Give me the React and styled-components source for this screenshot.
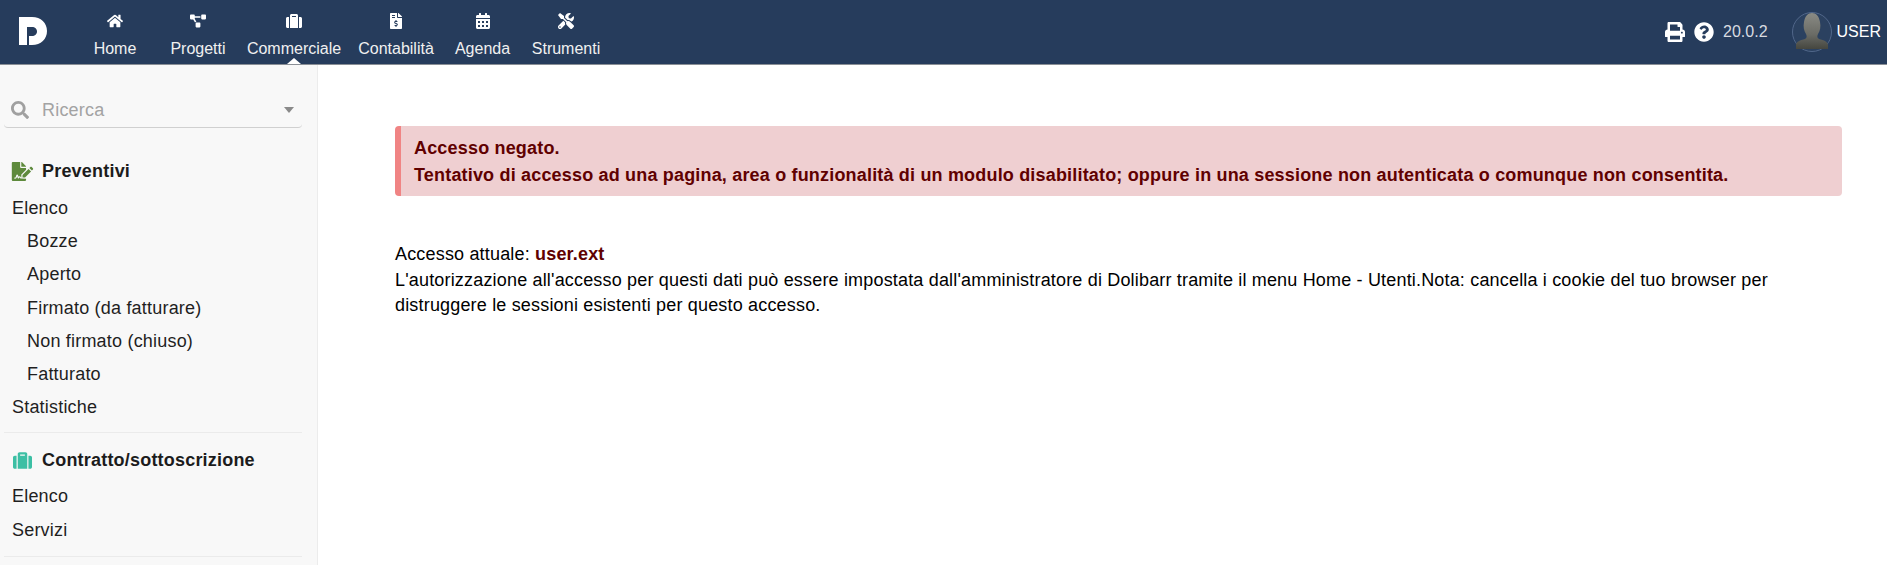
import React from 'react';
import styled, { createGlobalStyle } from 'styled-components';
import {
  FaHome,
  FaProjectDiagram,
  FaSuitcase,
  FaFileInvoiceDollar,
  FaCalendarAlt,
  FaTools,
  FaPrint,
  FaQuestionCircle,
  FaSearch,
  FaFileSignature,
} from 'react-icons/fa';

const GlobalStyle = createGlobalStyle`
  html, body {
    margin: 0;
    padding: 0;
    height: 100%;
    overflow: hidden;
    background: #fff;
    font-family: "Liberation Sans", Arial, sans-serif;
    font-size: 18px;
    color: #000;
  }
`;

const Page = styled.div`
  height: 565px;
  display: flex;
  flex-direction: column;
  overflow: hidden;
`;

// Top bar
const TopBar = styled.header`
  height: 65px;
  flex: none;
  display: flex;
  align-items: stretch;
  background: #263c5c;
  border-bottom: 1px solid #8a8f96;
  box-sizing: border-box;
  color: #f0f0f0;
`;

const Logo = styled.div`
  width: 78px;
  flex: none;
  display: flex;
  align-items: center;
  padding: 0 0 2px 19px;
  box-sizing: border-box;
`;

const Nav = styled.nav`
  display: flex;
  align-items: stretch;
`;

const NavItem = styled.a`
  position: relative;
  width: ${({ $width }) => $width}px;
  display: flex;
  flex-direction: column;
  align-items: center;
  padding-top: 13px;
  box-sizing: border-box;
  font-size: 16px;
  line-height: 18px;
  white-space: nowrap;

  svg {
    width: auto;
    height: 16px;
    margin-bottom: 11px;
    color: #fff;
  }

  ${({ $active }) => $active && `
    &::after {
      content: "";
      position: absolute;
      left: 50%;
      bottom: 0;
      margin-left: -7px;
      border-left: 7px solid transparent;
      border-right: 7px solid transparent;
      border-bottom: 6px solid #fff;
    }
  `}
`;

const TopRight = styled.div`
  margin-left: auto;
  display: flex;
  align-items: center;
  padding-right: 6px;
`;

const ToolIcon = styled.span`
  display: flex;
  margin-right: ${({ $gap }) => $gap}px;
  color: #fff;
  font-size: 20px;
`;

const Version = styled.span`
  font-size: 16px;
  color: #d8dbe0;
  margin-right: 24px;
`;

const Avatar = styled.svg`
  width: 40px;
  height: 40px;
  margin-right: 5px;
`;

const UserName = styled.span`
  font-size: 16px;
  color: #fff;
`;

// Body
const Body = styled.div`
  flex: 1;
  display: flex;
  min-height: 0;
`;

const Sidebar = styled.aside`
  width: 318px;
  flex: none;
  box-sizing: border-box;
  background: #f8f8f8;
  border-right: 1px solid #ececec;
  padding: 28px 15px 0 4px;
  overflow: hidden;
`;

const SearchBox = styled.div`
  height: 34px;
  display: flex;
  align-items: center;
  padding: 0 8px 0 7px;
  border-bottom: 1px solid #d0d0d0;
  border-radius: 0 0 4px 4px;
  color: #a3a3a3;
  font-size: 18px;
  letter-spacing: 0.2px;

  svg {
    font-size: 18px;
    color: #a0a0a0;
    margin-right: 13px;
  }
`;

const Caret = styled.span`
  margin-left: auto;
  border-left: 5px solid transparent;
  border-right: 5px solid transparent;
  border-top: 6px solid #8a8a8a;
`;

const MenuBlock = styled.section`
  padding-top: ${({ $first }) => ($first ? 27 : 11)}px;
  padding-bottom: ${({ $first }) => ($first ? 8 : 9)}px;
  border-bottom: 1px solid #ebebeb;
`;

const MenuTitle = styled.div`
  height: 33px;
  display: flex;
  align-items: center;
  padding-left: 7px;
  margin-bottom: ${({ $gap }) => $gap}px;
  font-weight: bold;
  font-size: 18px;
  letter-spacing: 0.2px;
  color: #1c1c1c;

  svg {
    font-size: 19px;
    width: 23px;
    color: ${({ $color }) => $color};
    margin-right: 8px;
  }
`;

const MenuLink = styled.a`
  display: block;
  height: 33.2px;
  line-height: 33.2px;
  padding-left: ${({ $sub }) => ($sub ? 23 : 8)}px;
  color: #1f1f1f;
  font-size: 18px;
  letter-spacing: 0.2px;
`;

const Main = styled.main`
  flex: 1;
  min-width: 0;
  padding: 61px 45px 0 77px;
`;

const Alert = styled.div`
  box-sizing: border-box;
  height: 70px;
  padding: 9px 13px;
  background: #efcfd1;
  border-left: 6px solid #f08484;
  border-radius: 4px;
  color: #600000;
  font-weight: bold;
  font-size: 18px;
  line-height: 27px;
  letter-spacing: 0.18px;
`;

const Info = styled.div`
  margin-top: 46px;
  font-size: 18px;
  line-height: 25.6px;
  letter-spacing: 0.175px;
`;

const Strong = styled.b`
  color: #600000;
`;

const items = [
  { label: 'Home', Icon: FaHome, width: 74 },
  { label: 'Progetti', Icon: FaProjectDiagram, width: 92 },
  { label: 'Commerciale', Icon: FaSuitcase, width: 100, active: true },
  { label: 'Contabilità', Icon: FaFileInvoiceDollar, width: 104 },
  { label: 'Agenda', Icon: FaCalendarAlt, width: 69 },
  { label: 'Strumenti', Icon: FaTools, width: 98 },
];

const LogoMark = () => (
  <svg width="28" height="28" viewBox="0 0 28 28">
    <path
      fill="#fff"
      fillRule="evenodd"
      d="M0 0h13c9 0 15 6 15 14s-6 14-15 14H0zM8 10v18h2v-9h3c3 0 5-2 5-4.500S16 10 13 10z"
    />
  </svg>
);

export default function App() {
  return (
    <Page>
      <GlobalStyle />
      <TopBar>
        <Logo>
          <LogoMark />
        </Logo>
        <Nav>
          {items.map(({ label, Icon, width, active }) => (
            <NavItem key={label} $width={width} $active={active}>
              <Icon />
              {label}
            </NavItem>
          ))}
        </Nav>
        <TopRight>
          <ToolIcon $gap={9}><FaPrint /></ToolIcon>
          <ToolIcon $gap={9}><FaQuestionCircle /></ToolIcon>
          <Version>20.0.2</Version>
          <Avatar viewBox="0 0 40 40">
            <defs>
              <linearGradient id="avatarBody" x1="0" y1="0" x2="0" y2="1">
                <stop offset="0" stopColor="#8a8b85" />
                <stop offset="0.6" stopColor="#6a6b65" />
                <stop offset="1" stopColor="#45463f" />
              </linearGradient>
            </defs>
            <circle cx="20" cy="20" r="19.500" fill="#2b4160" stroke="#51678a" />
            <path
              fill="url(#avatarBody)"
              d="M4 37v-4c0-3 4-5 9-6 2-1 2-3 1-5-2-3-3-7-2-12 1-6 4-9 8-9s7 3 8 9c1 5 0 9-2 12-1 2-1 4 1 5 5 1 9 3 9 6v4z"
            />
          </Avatar>
          <UserName>USER</UserName>
        </TopRight>
      </TopBar>
      <Body>
        <Sidebar>
          <SearchBox>
            <FaSearch />
            Ricerca
            <Caret />
          </SearchBox>
          <MenuBlock $first>
            <MenuTitle $color="#5e8a3c" $gap={4}><FaFileSignature />Preventivi</MenuTitle>
            <MenuLink>Elenco</MenuLink>
            <MenuLink $sub>Bozze</MenuLink>
            <MenuLink $sub>Aperto</MenuLink>
            <MenuLink $sub>Firmato (da fatturare)</MenuLink>
            <MenuLink $sub>Non firmato (chiuso)</MenuLink>
            <MenuLink $sub>Fatturato</MenuLink>
            <MenuLink>Statistiche</MenuLink>
          </MenuBlock>
          <MenuBlock>
            <MenuTitle $color="#3cbfa4" $gap={3}><FaSuitcase />Contratto/sottoscrizione</MenuTitle>
            <MenuLink>Elenco</MenuLink>
            <MenuLink>Servizi</MenuLink>
          </MenuBlock>
        </Sidebar>
        <Main>
          <Alert>
            Accesso negato.<br />
            Tentativo di accesso ad una pagina, area o funzionalità di un modulo disabilitato; oppure in una sessione non autenticata o comunque non consentita.
          </Alert>
          <Info>
            Accesso attuale: <Strong>user.ext</Strong><br />
            L'autorizzazione all'accesso per questi dati può essere impostata dall'amministratore di Dolibarr tramite il menu Home - Utenti.Nota: cancella i cookie del tuo browser per distruggere le sessioni esistenti per questo accesso.
          </Info>
        </Main>
      </Body>
    </Page>
  );
}
